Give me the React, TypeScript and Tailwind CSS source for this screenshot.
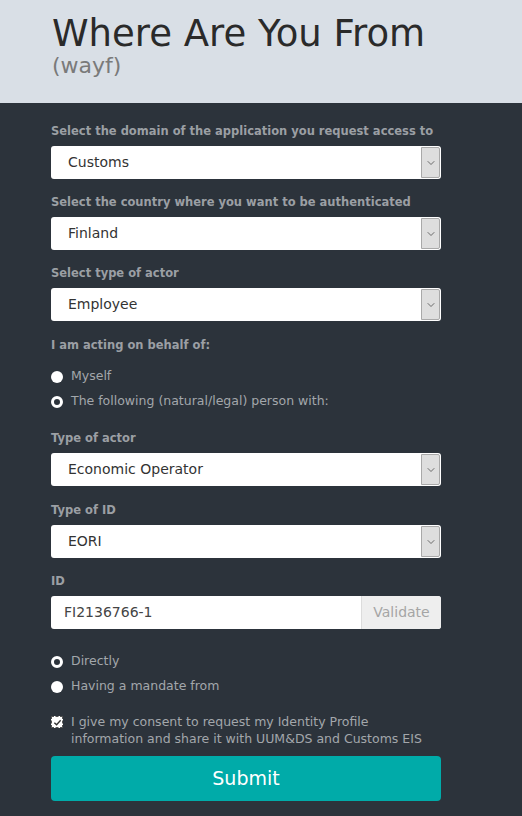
import { ChevronDown } from 'lucide-react';

const font = { fontFamily: '"DejaVu Sans", Verdana, sans-serif' };

function Label({ children }: { children: React.ReactNode }) {
  return <p className="h-[14px] text-[11.5px] font-bold text-[#9b9fa4] leading-[14px] mb-[8px]">{children}</p>;
}

function Select({ value }: { value: string }) {
  return (
    <div className="flex h-[33px] w-[390px] bg-white rounded-[3px] overflow-hidden">
      <div className="flex-1 flex items-center pl-[17px] text-[14px] text-[#333]">{value}</div>
      <div className="w-[19px] my-[1px] mr-[1px] bg-[#dedede] border border-[#a9a9a9] rounded-r-[2px] flex items-center justify-center">
        <ChevronDown className="w-[12px] h-[12px] text-[#444]" strokeWidth={1.5} />
      </div>
    </div>
  );
}

function Radio({ label, filled }: { label: string; filled?: boolean }) {
  return (
    <div className="flex items-center gap-[8px] h-[25px]">
      <span
        className={
          filled
            ? 'w-[12px] h-[12px] rounded-full bg-white'
            : 'w-[12px] h-[12px] rounded-full bg-[#2c333b] border-[3px] border-white'
        }
      />
      <span className="text-[12.5px] text-[#a3a7ab]">{label}</span>
    </div>
  );
}

export default function App() {
  return (
    <div className="min-h-[816px] bg-[#2c333b]" style={font}>
      <div className="bg-[#d9dfe6] h-[103px] pl-[52px] pt-[12px]">
        <h1 className="text-[37px] leading-[43px] text-[#2a2a2a]">Where Are You From</h1>
        <p className="text-[22px] leading-[22px] text-[#7a7a7a]">(wayf)</p>
      </div>
      <div className="pl-[51px] pt-[21px]">
        <Label>Select the domain of the application you request access to</Label>
        <Select value="Customs" />
        <div className="h-[16px]" />
        <Label>Select the country where you want to be authenticated</Label>
        <Select value="Finland" />
        <div className="h-[16px]" />
        <Label>Select type of actor</Label>
        <Select value="Employee" />
        <div className="h-[17px]" />
        <Label>I am acting on behalf of:</Label>
        <div className="pt-[4px]">
          <Radio label="Myself" filled />
          <Radio label="The following (natural/legal) person with:" />
        </div>
        <div className="h-[17px]" />
        <Label>Type of actor</Label>
        <Select value="Economic Operator" />
        <div className="h-[17px]" />
        <Label>Type of ID</Label>
        <Select value="EORI" />
        <div className="h-[16px]" />
        <Label>ID</Label>
        <div className="flex h-[33px] w-[390px] bg-white rounded-[3px] overflow-hidden">
          <div className="flex-1 flex items-center pl-[13px] text-[14px] text-[#444]">FI2136766-1</div>
          <div className="w-[80px] bg-[#eeeeee] border-l border-[#dcdcdc] flex items-center justify-center text-[14px] text-[#a5a5a5]">
            Validate
          </div>
        </div>
        <div className="pt-[20px]">
          <Radio label="Directly" />
          <Radio label="Having a mandate from" filled />
        </div>
        <div className="flex gap-[8px] mt-[14px] w-[400px]">
          <span className="mt-[3px] w-[12px] h-[12px] bg-white border border-dashed border-[#555] flex items-center justify-center shrink-0">
            <svg viewBox="0 0 10 10" className="w-[9px] h-[9px]">
              <path d="M1.5 5.2 L4 7.5 L8.5 2.5" fill="none" stroke="#333" strokeWidth="1.5" />
            </svg>
          </span>
          <p className="text-[12.5px] leading-[17px] text-[#a3a7ab]">
            I give my consent to request my Identity Profile
            <br />
            information and share it with UUM&amp;DS and Customs EIS
          </p>
        </div>
        <button className="mt-[9px] w-[390px] h-[45px] rounded-[4px] bg-[#00aba9] text-white text-[19px]">Submit</button>
      </div>
    </div>
  );
}
